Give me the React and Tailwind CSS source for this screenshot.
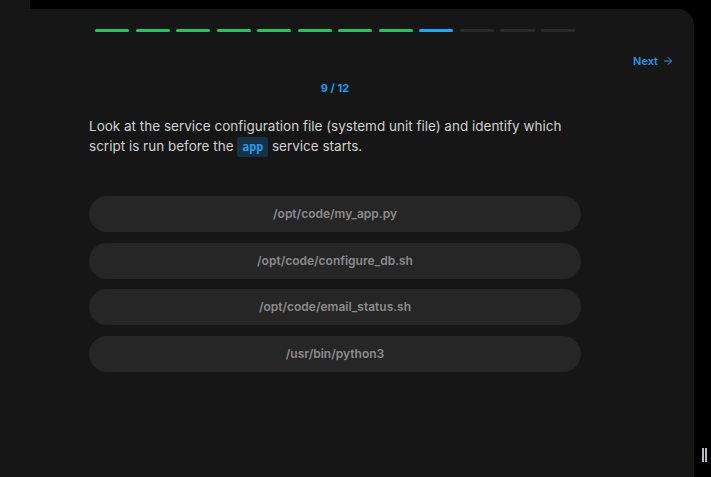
import { ArrowRight } from 'lucide-react';

const steps = Array.from({ length: 12 }, (_, i) => i + 1);
const current = 9;

const options = [
  '/opt/code/my_app.py',
  '/opt/code/configure_db.sh',
  '/opt/code/email_status.sh',
  '/usr/bin/python3',
];

function ProgressBar() {
  return (
    <div className="flex gap-[6.5px] px-[6px]">
      {steps.map((s) => (
        <div
          key={s}
          className={`h-[3px] flex-1 rounded-full ${
            s < current ? 'bg-[#22c55e]' : s === current ? 'bg-[#1ea7fd]' : 'bg-[#2a2a2a]'
          }`}
        />
      ))}
    </div>
  );
}

export default function App() {
  return (
    <div className="relative h-[477px] w-[711px] overflow-hidden bg-black font-['Inter','Liberation_Sans',sans-serif]">
      <div className="absolute left-0 top-0 h-[9px] w-[30px] bg-[#161616]" />
      <div className="mt-[9px] h-[468px] w-[694px] rounded-tr-[16px] bg-[#161616] pl-[89px] pr-[113px] pt-[20px]">
        <ProgressBar />
        <div className="mt-[21px] flex justify-end">
          <button className="mr-[-93px] flex items-center gap-[4px] text-[11px] font-semibold text-[#1e9bf0]">
            Next
            <ArrowRight className="h-[12px] w-[12px]" strokeWidth={2} />
          </button>
        </div>
        <div className="mt-[10px] text-center text-[11px] font-bold text-[#1e9bf0]">9 / 12</div>
        <p className="mt-[20px] text-[13.5px] leading-[20px] text-[#d0d0d0]">
          Look at the service configuration file (systemd unit file) and identify which script is run before the{' '}
          <code className="inline-block h-[20px] rounded-[3px] bg-[#173247] px-[5px] align-baseline font-['DejaVu_Sans_Mono',monospace] text-[11.5px] font-bold leading-[20px] text-[#2a9df0]">
            app
          </code>{' '}
          service starts.
        </p>
        <div className="mt-[39px] flex flex-col gap-[10.5px]">
          {options.map((opt) => (
            <button
              key={opt}
              className="flex h-[36px] w-full items-center justify-center rounded-full bg-[#262626] text-[12px] font-semibold text-[#8c8c8c]"
            >
              {opt}
            </button>
          ))}
        </div>
      </div>
      <div className="absolute left-[702px] top-[448px] h-[14px] w-[2px] bg-[#b8b8c0]" />
      <div className="absolute left-[705px] top-[448px] h-[14px] w-[2px] bg-[#b8b8c0]" />
    </div>
  );
}
